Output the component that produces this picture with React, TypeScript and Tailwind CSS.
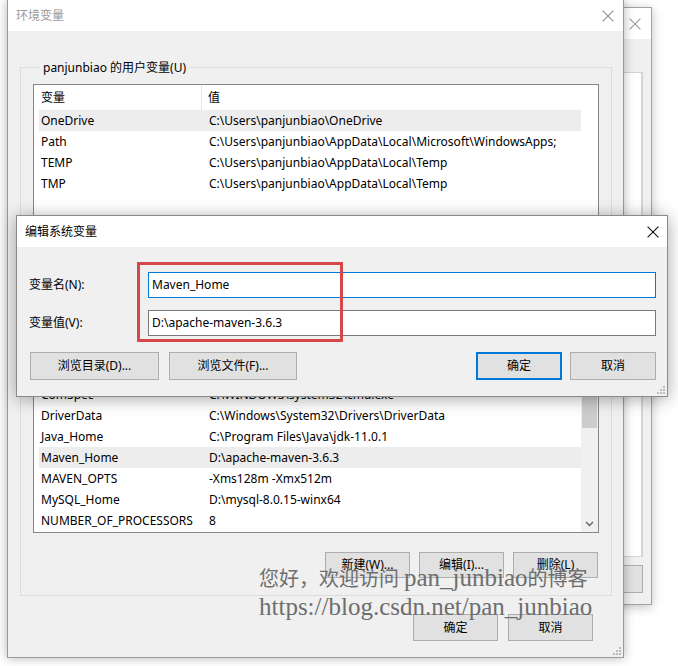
import React from "react";

const ui = "font-['Noto_Sans','Noto_Sans_CJK_SC',sans-serif] text-[12px] text-black";

function CloseIcon({ size = 11, color = "#000" }: { size?: number; color?: string }) {
  return (
    <svg width={size} height={size} viewBox="0 0 10 10">
      <path d="M0.5 0.5L9.5 9.5M9.5 0.5L0.5 9.5" stroke={color} strokeWidth="0.9" />
    </svg>
  );
}

function Grip() {
  const dots = [
    [6, 0],
    [3, 3],
    [6, 3],
    [0, 6],
    [3, 6],
    [6, 6],
  ];
  return (
    <svg width="8" height="8" viewBox="0 0 8 8" fill="#bcbcbc">
      {dots.map(([x, y], i) => (
        <rect key={i} x={x} y={y} width="2" height="2" />
      ))}
    </svg>
  );
}

function Btn({
  children,
  className = "",
  primary = false,
}: {
  children: React.ReactNode;
  className?: string;
  primary?: boolean;
}) {
  return (
    <div
      className={`h-full flex items-center justify-center bg-[#e1e1e1] ${
        primary ? "border-2 border-[#0078d7]" : "border border-[#adadad]"
      } ${className}`}
    >
      {children}
    </div>
  );
}

function Row({ name, value, selected = false }: { name: string; value: string; selected?: boolean }) {
  return (
    <div className={`flex h-[21px] shrink-0 items-center w-[542px] overflow-hidden ${selected ? "bg-[#ededed]" : ""}`}>
      <div className="w-[170px] shrink-0 pl-[2px] whitespace-nowrap">{name}</div>
      <div className="whitespace-nowrap">{value}</div>
    </div>
  );
}

const userVars = [
  { name: "OneDrive", value: "C:\\Users\\panjunbiao\\OneDrive", selected: true },
  { name: "Path", value: "C:\\Users\\panjunbiao\\AppData\\Local\\Microsoft\\WindowsApps;" },
  { name: "TEMP", value: "C:\\Users\\panjunbiao\\AppData\\Local\\Temp" },
  { name: "TMP", value: "C:\\Users\\panjunbiao\\AppData\\Local\\Temp" },
];

const sysVars = [
  { name: "ComSpec", value: "C:\\WINDOWS\\system32\\cmd.exe" },
  { name: "DriverData", value: "C:\\Windows\\System32\\Drivers\\DriverData" },
  { name: "Java_Home", value: "C:\\Program Files\\Java\\jdk-11.0.1" },
  { name: "Maven_Home", value: "D:\\apache-maven-3.6.3", selected: true },
  { name: "MAVEN_OPTS", value: "-Xms128m -Xmx512m" },
  { name: "MySQL_Home", value: "D:\\mysql-8.0.15-winx64" },
  { name: "NUMBER_OF_PROCESSORS", value: "8" },
];

export default function App() {
  return (
    <div className={`relative w-[678px] h-[666px] bg-white overflow-hidden ${ui}`}>
      {/* window behind */}
      <div className="absolute left-[300px] top-[7px] w-[352px] h-[598px] flex flex-col border border-[#a3a3a3] bg-[#f0f0f0] shadow-[0_2px_10px_rgba(0,0,0,0.25)]">
        <div className="h-[31px] bg-white flex items-center justify-end pr-[10px]">
          <CloseIcon size={12} color="#9a9a9a" />
        </div>
        <div className="flex-1 min-h-0 flex flex-col pt-[33px] pl-[20px] pr-[8px] pb-[11px]">
          <div className="flex-1 bg-white border border-[#d4d4d4] border-r-2" />
          <div className="mt-[8px] h-[28px] flex justify-end">
            <Btn className="w-[86px]">确定</Btn>
          </div>
        </div>
      </div>

      {/* 环境变量 */}
      <div className="absolute left-[7px] top-0 w-[617px] h-[658px] flex flex-col border-x border-b border-[#9a9a9a] bg-[#f0f0f0] shadow-[0_0_10px_rgba(0,0,0,0.3)]">
        <div className="h-[31px] shrink-0 bg-white flex items-center justify-between pl-[8px] pr-[9px]">
          <span className="text-[#9a9a9a]">环境变量</span>
          <CloseIcon size={12} color="#8f8f8f" />
        </div>
        <div className="flex-1 min-h-0 flex flex-col pl-[12px] pr-[11px] pb-[16px]">
          <fieldset className="mt-[28px] border border-[#dcdcdc] px-[12px] pb-[17px]">
            <legend className="ml-[7px] px-[3px] leading-[17px]">panjunbiao 的用户变量(U)</legend>
            <div className="mt-[8px] h-[150px] bg-white border border-[#828790] flex flex-col">
              <div className="h-[25px] shrink-0 ml-[5px] w-[542px] flex items-center">
                <div className="w-[163px] h-full flex items-center pl-[2px] border-r border-[#e5e5e5]">变量</div>
                <div className="pl-[6px]">值</div>
              </div>
              <div className="ml-[5px] flex flex-col">
                {userVars.map((v) => (
                  <Row key={v.name} {...v} />
                ))}
              </div>
            </div>
            <div className="mt-[19px] h-[26px] flex justify-end gap-[10px] mr-[1px]">
              <Btn className="w-[85px]">新建(N)...</Btn>
              <Btn className="w-[85px]">编辑(E)...</Btn>
              <Btn className="w-[85px]">删除(D)</Btn>
            </div>
          </fieldset>

          <fieldset className="mt-[10px] flex-1 min-h-0 flex flex-col border border-[#dcdcdc] px-[12px] pb-[17px]">
            <legend className="ml-[7px] px-[3px] leading-[17px]">系统变量(S)</legend>
            <div className="mt-[8px] flex-1 min-h-0 bg-white border border-[#828790] flex overflow-hidden">
              <div className="flex-1 min-h-0 flex flex-col justify-end pl-[5px] pb-[1px] overflow-hidden">
                {sysVars.map((v) => (
                  <Row key={v.name} {...v} />
                ))}
              </div>
              <div className="w-[17px] shrink-0 bg-[#f0f0f0] flex flex-col">
                <div className="flex-1 mx-[1px] bg-[#cdcdcd]" />
                <div className="h-[87px]" />
                <div className="h-[17px] flex items-center justify-center">
                  <svg width="9" height="6" viewBox="0 0 9 6">
                    <path d="M1 1L4.5 4.5L8 1" stroke="#606060" strokeWidth="1.3" fill="none" />
                  </svg>
                </div>
              </div>
            </div>
            <div className="mt-[19px] h-[26px] flex justify-end gap-[9px] mr-[1px]">
              <Btn className="w-[85px]">新建(W)...</Btn>
              <Btn className="w-[85px]">编辑(I)...</Btn>
              <Btn className="w-[85px]">删除(L)</Btn>
            </div>
          </fieldset>

          <div className="mt-[18px] h-[27px] flex justify-end gap-[10px] mr-[19px]">
            <Btn className="w-[85px]">确定</Btn>
            <Btn className="w-[85px]">取消</Btn>
          </div>
        </div>
        <div className="absolute right-[2px] bottom-[2px]">
          <Grip />
        </div>
      </div>

      {/* 编辑系统变量 */}
      <div className="absolute left-[16px] top-[215px] w-[652px] h-[182px] flex flex-col border border-[#8a8a8a] bg-[#f0f0f0] shadow-[0_2px_16px_rgba(0,0,0,0.35)]">
        <div className="h-[31px] shrink-0 bg-white flex items-center justify-between pl-[8px] pr-[8px]">
          <span>编辑系统变量</span>
          <CloseIcon size={12} color="#111" />
        </div>
        <div className="flex-1 min-h-0 flex flex-col pt-[25px] pl-[12px] pr-[11px] pb-[15px]">
          <div className="h-[26px] flex items-center">
            <div className="w-[119px] shrink-0">变量名(N):</div>
            <div className="flex-1 h-full bg-white border border-[#0078d7] px-[3px] flex items-center">Maven_Home</div>
          </div>
          <div className="mt-[12px] h-[26px] flex items-center">
            <div className="w-[119px] shrink-0">变量值(V):</div>
            <div className="flex-1 h-full bg-white border border-[#7a7a7a] px-[3px] flex items-center">D:\apache-maven-3.6.3</div>
          </div>
          <div className="mt-[16px] h-[28px] flex">
            <Btn className="w-[129px] ml-[1px]">浏览目录(D)...</Btn>
            <Btn className="w-[128px] ml-[10px]">浏览文件(F)...</Btn>
            <div className="flex-1" />
            <Btn className="w-[86px]" primary>
              确定
            </Btn>
            <Btn className="w-[86px] ml-[8px]">取消</Btn>
          </div>
        </div>
        <div className="absolute left-[120px] top-[46px] w-[206px] h-[80px] border-[3px] border-[#d6474a]" />
        <div className="absolute right-[2px] bottom-[2px]">
          <Grip />
        </div>
      </div>

      {/* watermark */}
      <div className="absolute left-[259px] top-[564px] leading-[27px] text-[#6e6e6e] font-['Liberation_Serif','Noto_Sans_CJK_SC',serif] whitespace-nowrap">
        <div className="text-[20px]">
          您好，欢迎访问 <span className="text-[25px]">pan_junbiao</span>的博客
        </div>
        <div className="text-[25px]">https://blog.csdn.net/pan_junbiao</div>
      </div>
    </div>
  );
}
